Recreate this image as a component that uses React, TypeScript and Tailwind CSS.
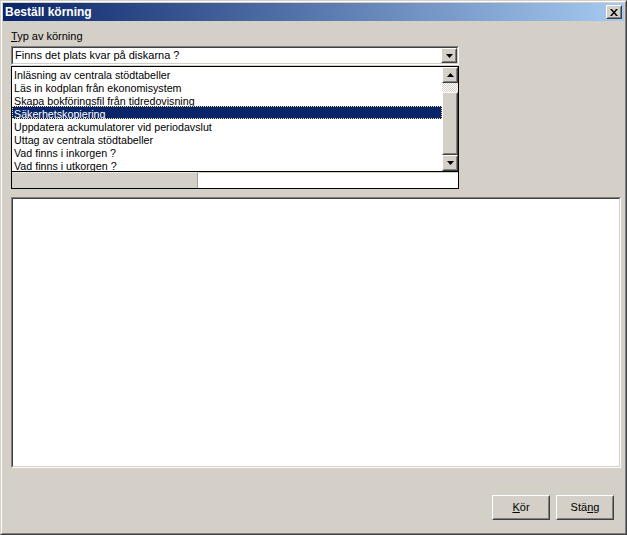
import type { ReactNode } from 'react'

const items = [
  'Inläsning av centrala stödtabeller',
  'Läs in kodplan från ekonomisystem',
  'Skapa bokföringsfil från tidredovisning',
  'Säkerhetskopiering',
  'Uppdatera ackumulatorer vid periodavslut',
  'Uttag av centrala stödtabeller',
  'Vad finns i inkorgen ?',
  'Vad finns i utkorgen ?',
]

// classic 3d edges
const Raised = ({ className = '', children }: { className?: string; children?: ReactNode }) => (
  <div className={`border border-t-white border-l-white border-r-[#404040] border-b-[#404040] ${className}`}>
    <div className="flex h-full w-full items-center justify-center border border-t-[#d4d0c8] border-l-[#d4d0c8] border-r-[#808080] border-b-[#808080] bg-[#d4d0c8]">
      {children}
    </div>
  </div>
)

const Sunken = ({ className = '', children }: { className?: string; children?: ReactNode }) => (
  <div className={`border border-t-[#808080] border-l-[#808080] border-r-white border-b-white ${className}`}>
    <div className="h-full w-full border border-t-[#404040] border-l-[#404040] border-r-[#d4d0c8] border-b-[#d4d0c8] bg-white">
      {children}
    </div>
  </div>
)

const ArrowDown = () => (
  <svg width="7" height="4" viewBox="0 0 7 4">
    <path d="M0 0h7L3.5 4z" fill="#000" />
  </svg>
)

const ArrowUp = () => (
  <svg width="7" height="4" viewBox="0 0 7 4">
    <path d="M0 4h7L3.5 0z" fill="#000" />
  </svg>
)

export default function App() {
  return (
    <div className="h-[535px] w-[627px] font-['Liberation_Sans',Arial,sans-serif] text-[11px] text-black">
      <div className="flex h-full w-full flex-col border border-t-[#d4d0c8] border-l-[#d4d0c8] border-r-[#404040] border-b-[#404040] bg-[#d4d0c8]">
        <div className="flex h-full w-full flex-col border border-t-white border-l-white border-r-[#808080] border-b-[#808080] p-px">
          {/* Title bar */}
          <div className="flex h-[18px] items-center justify-between bg-[linear-gradient(to_right,#0a246a,#a6caf0)] pl-[2px] pr-[2px]">
            <span className="text-[12px] font-bold leading-none text-white">Beställ körning</span>
            <Raised className="h-[14px] w-[16px]">
              <svg width="8" height="7" viewBox="0 0 8 7">
                <path d="M0 0h2l2 2.5L6 0h2L5 3.5 8 7H6L4 4.5 2 7H0l3-3.5z" fill="#000" />
              </svg>
            </Raised>
          </div>

          <div className="flex flex-1 flex-col pl-[8px] pr-[2px]">
            <div className="mt-[9px] h-[13px] leading-[13px] text-[#000]">
              <span className="underline">T</span>yp av körning
            </div>

            {/* combo */}
            <Sunken className="mt-[3px] h-[19px] w-[448px]">
              <div className="flex h-full items-center justify-between">
                <span className="pl-[2px] leading-none">Finns det plats kvar på diskarna ?</span>
                <Raised className="h-[15px] w-[16px]">
                  <ArrowDown />
                </Raised>
              </div>
            </Sunken>

            {/* list box */}
            <div className="mt-px flex h-[106px] w-[448px] border border-black bg-white">
              <div className="flex flex-1 flex-col">
                {items.map((item, i) => (
                  <div
                    key={item}
                    className={`h-[13px] whitespace-nowrap pl-[2px] text-[10.7px] ${
                      i === 3
                        ? 'border border-dotted border-[#f5e08a] bg-[#0a246a] pl-px leading-[14px] text-white'
                        : 'leading-[16px]'
                    }`}
                  >
                    {item}
                  </div>
                ))}
              </div>
              <div className="flex w-[16px] flex-col">
                <Raised className="h-[16px] w-[16px]">
                  <ArrowUp />
                </Raised>
                <div className="h-[9px] bg-[repeating-conic-gradient(#d4d0c8_0_25%,#ffffff_0_50%)] bg-[length:2px_2px]" />
                <Raised className="w-[16px] flex-1" />
                <Raised className="h-[16px] w-[16px]">
                  <ArrowDown />
                </Raised>
              </div>
            </div>

            {/* status row */}
            <div className="flex h-[17px] w-[448px] border-x border-b border-black">
              <div className="w-[186px] border-t border-r border-t-[#e8e8e8] border-r-[#a0a0a0] bg-[#d4d0c8]" />
              <div className="flex-1 border-t border-[#d4d0c8] bg-white" />
            </div>

            {/* output area */}
            <Sunken className="mt-[8px] h-[271px] w-[610px]" />

            <div className="mt-[27px] flex justify-end gap-[6px] pr-[8px]">
              <Raised className="h-[25px] w-[58px]">
                <span className="leading-none">
                  <span className="underline">K</span>ör
                </span>
              </Raised>
              <Raised className="h-[25px] w-[58px]">
                <span className="leading-none">
                  Stä<span className="underline">n</span>g
                </span>
              </Raised>
            </div>
          </div>
        </div>
      </div>
    </div>
  )
}
